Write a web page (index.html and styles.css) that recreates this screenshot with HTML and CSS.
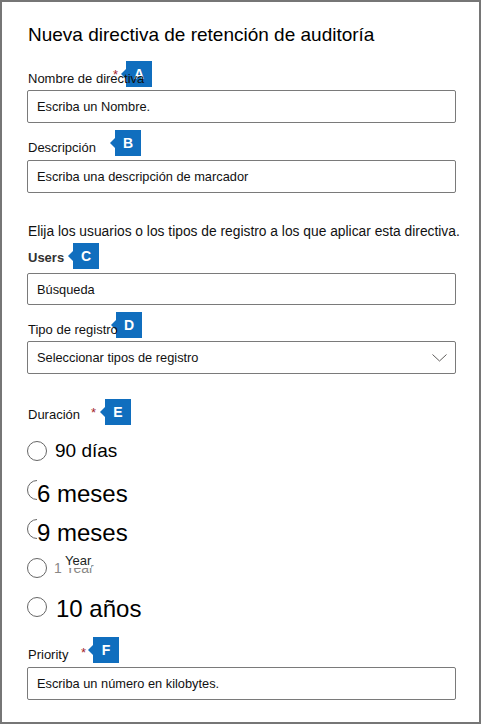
FILE: index.html
```html
<!DOCTYPE html>
<html lang="es">
<head>
<meta charset="utf-8">
<title>Nueva directiva de retención de auditoría</title>
<link rel="stylesheet" href="styles.css">
</head>
<body>
<div class="frame">
  <h1 class="title">Nueva directiva de retención de auditoría</h1>

  <div class="row r1">
    <span class="label">Nombre de directiva</span>
    <span class="req req-a">*</span>
    <span class="badge badge-a">A</span>
  </div>
  <div class="field f1"><span class="ph">Escriba un Nombre.</span></div>

  <div class="row r2">
    <span class="label">Descripción</span>
    <span class="badge badge-b">B</span>
  </div>
  <div class="field f2"><span class="ph">Escriba una descripción de marcador</span></div>

  <p class="intro">Elija los usuarios o los tipos de registro a los que aplicar esta directiva.</p>

  <div class="row r3">
    <span class="label label-strong">Users</span>
    <span class="badge badge-c">C</span>
  </div>
  <div class="field f3"><span class="ph">Búsqueda</span></div>

  <div class="row r4">
    <span class="label">Tipo de registro</span>
    <span class="badge badge-d">D</span>
  </div>
  <div class="field select"><span class="ph">Seleccionar tipos de registro</span>
    <svg class="chev" width="15" height="8" viewBox="0 0 15 8"><polyline points="0.5,0.5 7.5,7 14.5,0.5" fill="none" stroke="#605e5c" stroke-width="1"/></svg>
  </div>

  <div class="row r5">
    <span class="label label-mid">Duración</span>
    <span class="req req-e">*</span>
    <span class="badge badge-e">E</span>
  </div>

  <div class="radios">
    <div class="opt"><span class="circle"></span><span class="opt-label o90">90 días</span></div>
    <div class="opt"><span class="circle"></span><span class="opt-label big cover">6 meses</span></div>
    <div class="opt"><span class="circle"></span><span class="opt-label big cover">9 meses</span></div>
    <div class="opt"><span class="circle"></span><span class="opt-label small"><span class="yr">1 Year<span class="yr-over">Year</span></span></span></div>
    <div class="opt"><span class="circle"></span><span class="opt-label big o10">10 años</span></div>
  </div>

  <div class="row r6">
    <span class="label">Priority</span>
    <span class="req req-f">*</span>
    <span class="badge badge-f">F</span>
  </div>
  <div class="field f6"><span class="ph">Escriba un número en kilobytes.</span></div>
</div>
</body>
</html>
```
FILE: styles.css
```css
* { box-sizing: border-box; }

body {
  margin: 0;
  background: #fff;
  font-family: "Liberation Sans", Arial, sans-serif;
  color: #201f1e;
}

.frame {
  width: 481px;
  height: 724px;
  border: 2px solid #767676;
  padding: 0 23px 0 25px;
  display: flex;
  flex-direction: column;
  overflow: hidden;
}

.title {
  margin: 20px 0 0 1px;
  font-size: 19px;
  font-weight: 400;
  line-height: 26px;
  color: #000;
  white-space: nowrap;
}

.row {
  position: relative;
  height: 26px;
  display: flex;
  align-items: flex-end;
  flex: none;
}
.r1 { margin-top: 13px; }
.r2 { margin-top: 7px; }
.r3 { margin-top: 1px; }
.r4 { margin-top: 7px; }
.r5 { margin-top: 25px; }
.r6 { margin-top: 11px; }

.label {
  position: relative;
  z-index: 2;
  margin-left: 1px;
  font-size: 13px;
  line-height: 16px;
  color: #111;
  white-space: nowrap;
}
.label-strong {
  font-size: 13px;
  font-weight: 700;
  color: #323130;
  margin-bottom: 3px;
}
.label-mid { margin-bottom: 2px; }

.req {
  position: absolute;
  z-index: 3;
  font-size: 13px;
  line-height: 13px;
  color: #a4262c;
}
.req-a { left: 86px; top: 7px; }
.req-e { left: 64px; top: 7px; }
.req-f { left: 54px; top: 9px; }

.badge {
  position: absolute;
  top: 0;
  z-index: 1;
  width: 26px;
  height: 26px;
  background: #106ebe;
  color: #fff;
  font-size: 14px;
  font-weight: 700;
  line-height: 26px;
  text-align: center;
}
.badge::before {
  content: "";
  position: absolute;
  left: -5px;
  top: 8px;
  border-top: 5px solid transparent;
  border-bottom: 5px solid transparent;
  border-right: 5px solid #106ebe;
}
.badge-a { left: 99px; }
.badge-b { left: 88px; }
.badge-c { left: 46px; }
.badge-d { left: 89px; }
.badge-e { left: 78px; }
.badge-f { left: 66px; }

.field {
  flex: none;
  height: 33px;
  border: 1px solid #7a7a7a;
  border-radius: 2px;
  padding: 0 9px;
  display: flex;
  align-items: center;
  background: #fff;
}
.f1 { margin-top: 3px; }
.f2 { margin-top: 4px; }
.f3 { margin-top: 4px; height: 32px; }
.select { margin-top: 3px; justify-content: space-between; padding-right: 8px; }
.f6 { margin-top: 4px; }

.ph {
  font-size: 12.8px;
  color: #111;
  white-space: nowrap;
}

.chev { display: block; }

.intro {
  margin: 29px 0 0 1px;
  font-size: 13.8px;
  line-height: 20px;
  color: #111;
  white-space: nowrap;
}

.radios {
  margin-top: 6px;
  display: flex;
  flex-direction: column;
}

.opt {
  height: 39px;
  display: flex;
  align-items: center;
}

.circle {
  flex: none;
  width: 20px;
  height: 20px;
  border: 1.5px solid #666;
  border-radius: 50%;
  background: #fff;
}

.opt-label {
  position: relative;
  white-space: nowrap;
  color: #000;
}
.o90 { font-size: 19px; margin-left: 8px; }
.big { font-size: 24px; }
.cover { background: #fff; margin-left: -10px; padding-top: 8px; }
.o10 { margin-left: 9px; padding-top: 4px; }
.small { margin-left: 7px; font-size: 14px; line-height: 16px; color: #8a8886; }

.yr { position: relative; }
.yr-over {
  position: absolute;
  left: 11px;
  top: -6px;
  font-size: 13px;
  line-height: 14px;
  color: #201f1e;
  background: #fff;
}
```
